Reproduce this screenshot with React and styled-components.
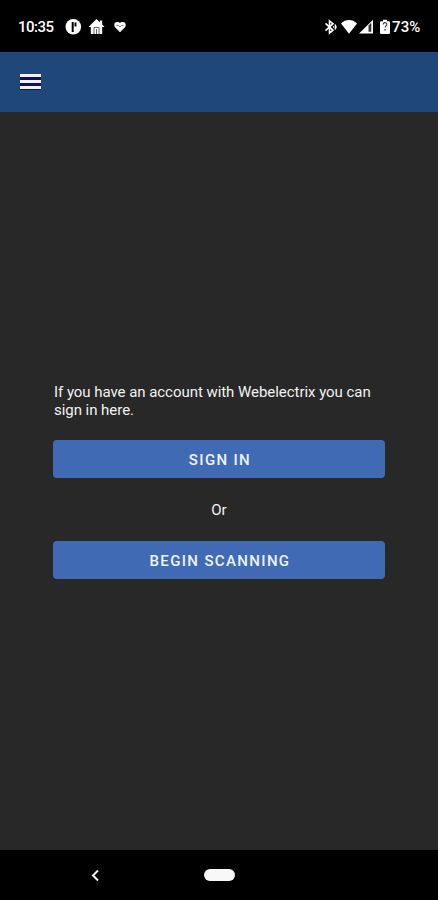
import React from "react";
import styled, { createGlobalStyle } from "styled-components";

const GlobalStyle = createGlobalStyle`
    * {
        box-sizing: border-box;
    }
    body {
        margin: 0;
        background: #000;
        font-family: Roboto, "Liberation Sans", sans-serif;
    }
`
const Screen = styled.div`
    display: flex;
    flex-direction: column;
    width: 438px;
    height: 900px;
    overflow: hidden;
    background: #282828;
`
const StatusBar = styled.header`
    display: flex;
    justify-content: space-between;
    height: 52px;
    padding: 19px 16px 17px 18px;
    background: #000;
    color: #fff;
`
const StatusGroup = styled.div`
    display: flex;
    align-items: center;
    height: 16px;
`
const StatusText = styled.span`
    width: ${props => props.$width}px;
    padding-left: ${props => props.$indent || 0}px;
    font-size: 15px;
    font-weight: 500;
    line-height: 16px;
    letter-spacing: ${props => props.$spacing}px;
    white-space: nowrap;
`
const StatusIcon = styled.svg`
    display: block;
    flex: none;
    height: 16px;
    margin-left: ${props => props.$gap}px;
`
const AppBar = styled.nav`
    display: flex;
    height: 60px;
    padding: 22px 20px;
    background: #1f477a;
`
const MenuButton = styled.button`
    display: flex;
    flex-direction: column;
    gap: 3px;
    width: 21px;
    height: 16px;
    padding: 0;
    border: none;
    background: #10105e;
    cursor: pointer;
`
const MenuLine = styled.span`
    height: 3px;
    background: #f3efff;
`
const Content = styled.main`
    display: flex;
    flex-direction: column;
    flex: 1;
    padding: 271px 53px 0;
    color: #f2f2f2;
`
const Message = styled.p`
    margin: 0 0 21px;
    padding-left: 1px;
    font-size: 15px;
    line-height: 18px;
    letter-spacing: -0.045px;
`
const Divider = styled.p`
    margin: 22px 0 21px;
    font-size: 15px;
    line-height: 20px;
    text-align: center;
`
const ActionButton = styled.button`
    height: 38px;
    padding: 1px 0 0 2px;
    border: none;
    border-radius: 4px;
    background: #406bb4;
    color: #edf3ff;
    font-family: inherit;
    font-size: 15px;
    font-weight: 500;
    letter-spacing: 1.35px;
    cursor: pointer;
`
const NavBar = styled.footer`
    display: flex;
    align-items: center;
    height: 50px;
    padding-left: 91px;
    background: #000;
`
const BackIcon = styled.svg`
    display: block;
    width: 9px;
    height: 13px;
`
const HomePill = styled.span`
    width: 31px;
    height: 12px;
    margin-left: 104px;
    border-radius: 6px;
    background: #f8f8f8;
`

const App = () => {
    return(
        <Screen>
            <GlobalStyle />
            <StatusBar>
                <StatusGroup>
                    <StatusText $spacing={-0.5} $width={36}>10:35</StatusText>
                    <StatusIcon $gap={11} width="17" viewBox="0 0 17 16">
                        <circle cx="8.3" cy="7.8" r="7.8" fill="#fff" />
                        <path d="M6.7 3h2v10h-2zM9.5 3.500h2v4h-2z" fill="#000" />
                    </StatusIcon>
                    <StatusIcon $gap={6} width="17" viewBox="0 0 17 16">
                        <path d="M8.500 0 .5 8h2.300v7h11.400V8h2.300l-2.300-2.500V1.500h-2.400v1.700Z" fill="#fff" />
                        <path d="M6 15V8.500h5V15M8.500 10v5" fill="none" stroke="#555" strokeWidth=".9" />
                    </StatusIcon>
                    <StatusIcon $gap={9} width="12" viewBox="0 0 12 16">
                        <path d="M6 13.200 1.200 8.400C-.8 6 .5 3 3.200 3 4.500 3 5.400 3.400 6 4 6.600 3.400 7.500 3 8.800 3c2.700 0 4 3 2 5.400Z" fill="#fff" />
                        <path d="M2.500 6.500h2L6 8l1.500-1.500h2" fill="none" stroke="#777" strokeWidth=".9" />
                    </StatusIcon>
                </StatusGroup>
                <StatusGroup>
                    <StatusIcon $gap={0} width="13" viewBox="0 0 13 16">
                        <path d="m1.500 4.300 7.500 7L5.500 14V2L9 4.700l-7.500 7" fill="none" stroke="#fff" strokeWidth="1.600" />
                        <path d="M9 8h1.500M11 5.500 12 8l-1 2.500" fill="none" stroke="#fff" strokeWidth="1.500" />
                    </StatusIcon>
                    <StatusIcon $gap={4} width="16" viewBox="0 0 16 16">
                        <path d="M0 4.400C4.500-.2 11.500-.2 16 4.400L8 14.800Z" fill="#fff" />
                    </StatusIcon>
                    <StatusIcon $gap={2} width="14" viewBox="0 0 14 16">
                        <path d="M0 14.500 14 .8v13.700Z" fill="#fff" />
                        <path d="M9.500 6.500 12.300 3.800v9H9.500Z" fill="#333" />
                    </StatusIcon>
                    <StatusIcon $gap={7} width="10" viewBox="0 0 10 16">
                        <path d="M3 .8h4v1.500h1.800A1.200 1.200 0 0 1 10 3.500v10.200a1.200 1.200 0 0 1-1.200 1.200H1.200A1.200 1.200 0 0 1 0 13.700V3.500a1.200 1.200 0 0 1 1.200-1.200H3Z" fill="#fff" />
                        <path d="M3.200 5.500a1.800 1.800 0 1 1 2.700 1.500L5 8.500M5 10v1.700" fill="none" stroke="#444" strokeWidth="1.200" />
                    </StatusIcon>
                    <StatusText $spacing={0.1} $indent={2} $width={32}>73%</StatusText>
                </StatusGroup>
            </StatusBar>
            <AppBar>
                <MenuButton aria-label="Menu">
                    <MenuLine />
                    <MenuLine />
                    <MenuLine />
                </MenuButton>
            </AppBar>
            <Content>
                <Message>If you have an account with Webelectrix you can sign in here.</Message>
                <ActionButton>SIGN IN</ActionButton>
                <Divider>Or</Divider>
                <ActionButton>BEGIN SCANNING</ActionButton>
            </Content>
            <NavBar>
                <BackIcon viewBox="0 0 9 13">
                    <path d="M7 1.500 2 6.500l5 5" fill="none" stroke="#f2f2f2" strokeWidth="2" />
                </BackIcon>
                <HomePill />
            </NavBar>
        </Screen>
    );
};

export default App;
